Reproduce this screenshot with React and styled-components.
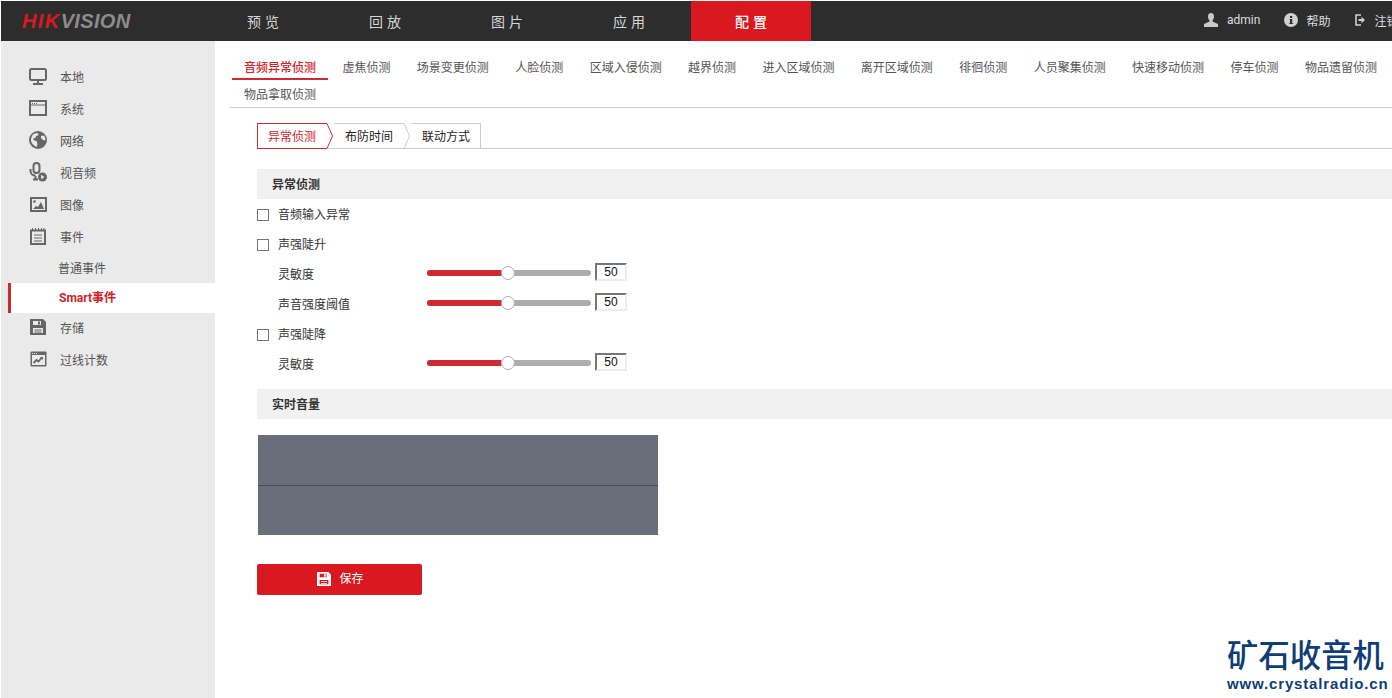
import React from 'react';
import styled, { createGlobalStyle } from 'styled-components';

const Global = createGlobalStyle`
  html, body { margin: 0; padding: 0; background: #fff; }
  body { font-family: "Noto Sans CJK SC", "Liberation Sans", sans-serif; font-size: 12px; color: #333; }
  * { box-sizing: border-box; }
`;
const Page = styled.div`
  position: relative; width: 1392px; height: 698px; overflow: hidden;
  padding: 1px 0 0 1px; display: flex; flex-direction: column;
`;
const Header = styled.header`
  height: 40px; flex: none; background: #2d2d2d; display: flex; align-items: stretch; white-space: nowrap;
`;
const Logo = styled.div`
  width: 202px; flex: none; padding: 0 0 1px 21px; display: flex; align-items: center;
  font: italic bold 20px/1 "Liberation Sans", sans-serif; letter-spacing: 0.35px; color: #8c8c8c;
  b { color: #d9181f; letter-spacing: 1.4px; }
`;
const Nav = styled.nav`display: flex; gap: 2px; flex: none;`;
const NavItem = styled.div`
  width: 120px; display: flex; align-items: center; justify-content: center;
  font-size: 14px; letter-spacing: 4px; padding-left: 4px;
  color: ${p => p.$active ? '#fff' : '#d6d6d6'};
  background: ${p => p.$active ? '#d9181f' : 'transparent'};
  font-weight: ${p => p.$active ? 500 : 400};
`;
const UserBlock = styled.div`
  flex: none; margin-left: 393px; padding-bottom: 2px; display: flex; align-items: center; color: #ddd;
  font-family: Roboto, "Noto Sans CJK SC", sans-serif; font-size: 12px;
`;
const UserItem = styled.div`
  display: flex; align-items: center; gap: ${p => p.$gap}px; margin-right: ${p => p.$mr}px;
`;
const Body = styled.div`flex: 1; display: flex; min-height: 0;`;
const Side = styled.aside`
  width: 214px; flex: none; background: #eaeaea; padding: 20px 0 0 7px; color: #555;
`;
const SideRow = styled.div`
  height: 32px; display: flex; align-items: center; padding: 0 0 ${p => p.$pb}px 21px; gap: 13px;
`;
const IconBox = styled.span`width: 18px; height: 18px; display: flex; align-items: center; justify-content: center; flex: none;`;
const SubRow = styled.div`
  height: 30px; display: flex; align-items: center; padding: 0 0 2px 50px;
`;
const ActiveSub = styled(SubRow)`
  background: #fff; border-left: 3px solid #ce2a33; padding: 0 0 4px 48px; color: #d0232c; font-weight: 700;
  font-family: Roboto, "Noto Sans CJK SC", sans-serif;
`;
const Main = styled.main`flex: 1; min-width: 0; padding-top: 13px;`;
const TabBar = styled.div`
  margin-left: 15px; padding-left: 2px; height: 54px; border-bottom: 1px solid #ccc;
  display: flex; flex-wrap: wrap; align-content: flex-start; column-gap: 2.4px;
`;
const Tab = styled.div`
  height: 26px; padding: 0 12px; display: flex; align-items: center; white-space: nowrap;
  color: ${p => p.$active ? '#d0232c' : '#555'};
  font-weight: ${p => p.$active ? 500 : 400};
  border-bottom: 2px solid ${p => p.$active ? '#ce2a33' : 'transparent'};
  margin-bottom: 1px;
`;
const Pane = styled.div`padding-left: 42px; padding-top: 15px;`;
const Steps = styled.div`
  display: flex; height: 26px; border-bottom: 1px solid #ccc;
`;
const Step = styled.div`
  position: relative; width: 70px; margin-right: 7px; height: 26px; display: flex; align-items: center;
  padding: 0 0 2px ${p => p.$active ? 10 : 11}px;
  color: ${p => p.$active ? '#d0232c' : '#222'};
  border: 1px solid ${p => p.$active ? '#ce2a33' : '#ccc'};
  border-left-width: ${p => p.$active ? 1 : 0}px;
  border-right-width: ${p => p.$last ? 1 : 0}px;
`;
const Chevron = styled.svg`
  position: absolute; left: 100%; top: -1px; width: 7px; height: 26px; display: block; overflow: visible;
`;
const SectionHead = styled.div`
  height: 30px; margin-top: ${p => p.$mt}px; background: #f1f1f1; padding: 0 0 2px 15px; display: flex; align-items: center;
  font-weight: 700; color: #333;
`;
const Rows = styled.div`display: flex; flex-direction: column;`;
const CheckRow = styled.label`
  height: 30px; display: flex; align-items: center; gap: 9px; color: #333; padding-bottom: 2px;
`;
const Box = styled.span`
  width: 12px; height: 12px; border: 1px solid #767676; background: #fff; flex: none; margin-top: 4px;
`;
const SliderRow = styled.div`height: 30px; display: flex; align-items: center; padding-left: 21px; color: #333;`;
const SliderLabel = styled.span`width: 149px; flex: none; padding-bottom: 1px;`;
const Track = styled.div`
  position: relative; width: 164px; height: 6px; border-radius: 3px; background: #adadad; flex: none; margin-top: -2px;
`;
const Fill = styled.div`height: 100%; border-radius: 3px 0 0 3px; background: #ce2a33;`;
const Thumb = styled.span`
  position: absolute; top: -4px; width: 14px; height: 14px; margin-left: -7px; border-radius: 50%;
  background: #fff; border: 1px solid #adadad;
`;
const NumInput = styled.input`
  width: 32px; height: 18px; margin: -5px 0 0 4px; padding: 0; text-align: center; background: #fff; color: #111;
  border: 2px solid; border-color: #767676 #ededed #ededed #767676; outline: 0;
  font: 12px "Liberation Sans", sans-serif;
`;
const Meter = styled.div`
  width: 400px; height: 100px; margin: 16px 0 0 1px; background: #686f7b; display: flex; flex-direction: column; justify-content: center;
  &::after { content: ""; display: block; height: 1px; background: #474c55; margin-top: 1px; }
`;
const SaveButton = styled.button`
  width: 165px; height: 31px; margin-top: 29px; border: 0; border-radius: 2px; background: #d9181f; color: #fff;
  display: flex; align-items: center; justify-content: center; gap: 8px; font: inherit; padding: 0 0 4px 2px;
  svg { margin-top: 3px; }
`;
const Watermark = styled.div`
  position: absolute; left: 1227px; top: 634px; width: 165px; color: #0f3d75; white-space: nowrap;
`;
const MarkTitle = styled.div`font: 500 31.4px/40px "Noto Sans CJK SC", sans-serif;`;
const MarkUrl = styled.div`font: 700 15px/16px "Liberation Sans", sans-serif; letter-spacing: 0.85px; margin-top: 2px;`;

const g = '#666';
const Icons = {
  monitor: <svg width="18" height="17" viewBox="0 0 18 17"><rect x="1" y="1" width="16" height="11" rx="1.5" fill="none" stroke={g} strokeWidth="2"/><path d="M8 13h2v2H8zM4 15h10v2H4z" fill={g}/></svg>,
  system: <svg width="18" height="16" viewBox="0 0 18 16"><rect x="1" y="1" width="16" height="14" fill="none" stroke={g} strokeWidth="2"/><path d="M2 5h14" stroke={g}/><path d="M3 3h1v1H3zM5 3h1v1H5zM7 3h1v1H7z" fill={g}/></svg>,
  globe: <svg width="18" height="18" viewBox="0 0 18 18"><circle cx="9" cy="9" r="9" fill={g}/><path d="M4 3.500c2-1.500 4-1.500 5.500-1l-.5 2-2 .5-.5 2-2.500.5 1 2 2.500.5 1 3-1 3C5 14.500 2 12.500 2 9c0-2 .8-4 2-5.500zM12 5l3-.5c1.300 1.500 1.500 3.500 1.300 5l-2.300-.5-2-2z" fill="#eaeaea"/></svg>,
  mic: <svg width="18" height="20" viewBox="0 0 18 20"><rect x="4.500" y="1" width="6" height="10" rx="3" fill="none" stroke={g} strokeWidth="2"/><path d="M1.500 7v2c0 3 2.500 4.500 5 4.500M4 17.500h5M6.500 14v3" fill="none" stroke={g} strokeWidth="2"/><circle cx="13.500" cy="15" r="4.500" fill={g}/><path d="M12.200 12.800l3.300 2.200-3.300 2.200z" fill="#eaeaea"/></svg>,
  image: <svg width="17" height="15" viewBox="0 0 17 15"><rect x="1" y="1" width="15" height="13" fill="none" stroke={g} strokeWidth="2"/><circle cx="4.500" cy="4.500" r="1.300" fill={g}/><path d="M3 12l3-3 2 1 3-5 3 7z" fill={g}/></svg>,
  event: <svg width="16" height="17" viewBox="0 0 16 17"><rect x="1" y="2.500" width="14" height="13.500" fill="none" stroke={g} strokeWidth="2"/><path d="M4 7h8M4 10h8M4 13h8" stroke={g}/><path d="M2 0h1v2H2zM5 0h1v2H5zM8 0h1v2H8zM11 0h1v2h-1zM13.500 0h1v2h-1z" fill={g}/></svg>,
  disk: <svg width="16" height="16" viewBox="0 0 16 16"><path d="M0 0h13l3 3v13H0z" fill={g}/><path d="M3 2h8v4H3zM3 9h10v5H3z" fill="#eaeaea"/><path d="M8 2.500h2v3H8zM4.500 10.500h7v1h-7zM4.500 12.500h7v1h-7z" fill={g}/></svg>,
  chart: <svg width="17" height="16" viewBox="0 0 17 16"><rect x="0.500" y="0.500" width="16" height="15" rx="1" fill={g}/><rect x="2" y="4" width="13" height="10" fill="#eaeaea"/><path d="M2 2h1v1H2zM4 2h1v1H4zM6 2h1v1H6z" fill="#eaeaea"/><path d="M3.500 12l3-3 2 1.500 3-3.500" fill="none" stroke={g} strokeWidth="1.800"/><path d="M10 6h3v3z" fill={g}/></svg>,
};

const side1 = [['monitor','本地'],['system','系统'],['globe','网络'],['mic','视音频'],['image','图像'],['event','事件']];
const side2 = [['disk','存储'],['chart','过线计数']];
const tabs = ['音频异常侦测','虚焦侦测','场景变更侦测','人脸侦测','区域入侵侦测','越界侦测','进入区域侦测','离开区域侦测','徘徊侦测','人员聚集侦测','快速移动侦测','停车侦测','物品遗留侦测','物品拿取侦测'];

const Slider = ({ label }) => (
  <SliderRow>
    <SliderLabel>{label}</SliderLabel>
    <Track>
      <Fill style={{ width: '45%' }} />
      <Thumb style={{ left: '49.500%' }} />
    </Track>
    <NumInput readOnly value="50" />
  </SliderRow>
);
const Check = ({ label }) => <CheckRow><Box />{label}</CheckRow>;
const Arrow = ({ color }) => (
  <Chevron viewBox="0 0 7 26"><path d="M0 0.500L5.500 13 0 25.500" fill="#fff" stroke={color} /></Chevron>
);

export default function App() {
  return (
    <Page>
      <Global />
      <Header>
        <Logo><b>HIK</b>VISION</Logo>
        <Nav>
          {['预览','回放','图片','应用'].map(t => <NavItem key={t}>{t}</NavItem>)}
          <NavItem $active>配置</NavItem>
        </Nav>
        <UserBlock>
          <UserItem $gap={9} $mr={24}>
            <svg width="14" height="14" viewBox="0 0 14 14"><path d="M4 3.500a3 3.500 0 0 1 6 0c0 2-1 3.500-1.500 4l0 1L14 11v3H0v-3l5.500-2.500 0-1C5 7 4 5.500 4 3.500z" fill="#c9c9c9"/></svg>
            admin
          </UserItem>
          <UserItem $gap={8} $mr={25}>
            <svg width="14" height="14" viewBox="0 0 14 14"><circle cx="7" cy="7" r="7" fill="#d0d0d0"/><path d="M6 3h2.200v2H6zM5.500 6h2.700v4.200h1V11H5v-.8h1V6.800h-.5z" fill="#2d2d2d"/></svg>
            帮助
          </UserItem>
          <UserItem $gap={9} $mr={0}>
            <svg width="10" height="12" viewBox="0 0 10 12"><path d="M6 1H1v10h5" fill="none" stroke="#d0d0d0" strokeWidth="1.600"/><path d="M3.500 5h3V2.800L10 6 6.500 9.200V7h-3z" fill="#d0d0d0"/></svg>
            注销
          </UserItem>
        </UserBlock>
      </Header>
      <Body>
        <Side>
          {side1.map(([i, t]) => <SideRow key={t} $pb={2}><IconBox>{Icons[i]}</IconBox>{t}</SideRow>)}
          <SubRow>普通事件</SubRow>
          <ActiveSub>Smart事件</ActiveSub>
          {side2.map(([i, t]) => <SideRow key={t} $pb={4}><IconBox>{Icons[i]}</IconBox>{t}</SideRow>)}
        </Side>
        <Main>
          <TabBar>
            {tabs.map((t, i) => <Tab key={t} $active={i === 0}>{t}</Tab>)}
          </TabBar>
          <Pane>
            <Steps>
              <Step $active>异常侦测<Arrow color="#ce2a33" /></Step>
              <Step>布防时间<Arrow color="#ccc" /></Step>
              <Step $last>联动方式</Step>
            </Steps>
            <SectionHead $mt={20}>异常侦测</SectionHead>
            <Rows>
              <Check label="音频输入异常" />
              <Check label="声强陡升" />
              <Slider label="灵敏度" />
              <Slider label="声音强度阈值" />
              <Check label="声强陡降" />
              <Slider label="灵敏度" />
            </Rows>
            <SectionHead $mt={10}>实时音量</SectionHead>
            <Meter />
            <SaveButton>
              <svg width="14" height="14" viewBox="0 0 16 16"><path d="M0 0h13l3 3v13H0z" fill="#fff"/><path d="M3 2h8v4H3zM3 9h10v5H3z" fill="#d9181f"/><path d="M8 2.500h2v3H8zM4.500 10.500h7v1h-7zM4.500 12.500h7v1h-7z" fill="#fff"/></svg>
              保存
            </SaveButton>
          </Pane>
        </Main>
      </Body>
      <Watermark>
        <MarkTitle>矿石收音机</MarkTitle>
        <MarkUrl>www.crystalradio.cn</MarkUrl>
      </Watermark>
    </Page>
  );
}
